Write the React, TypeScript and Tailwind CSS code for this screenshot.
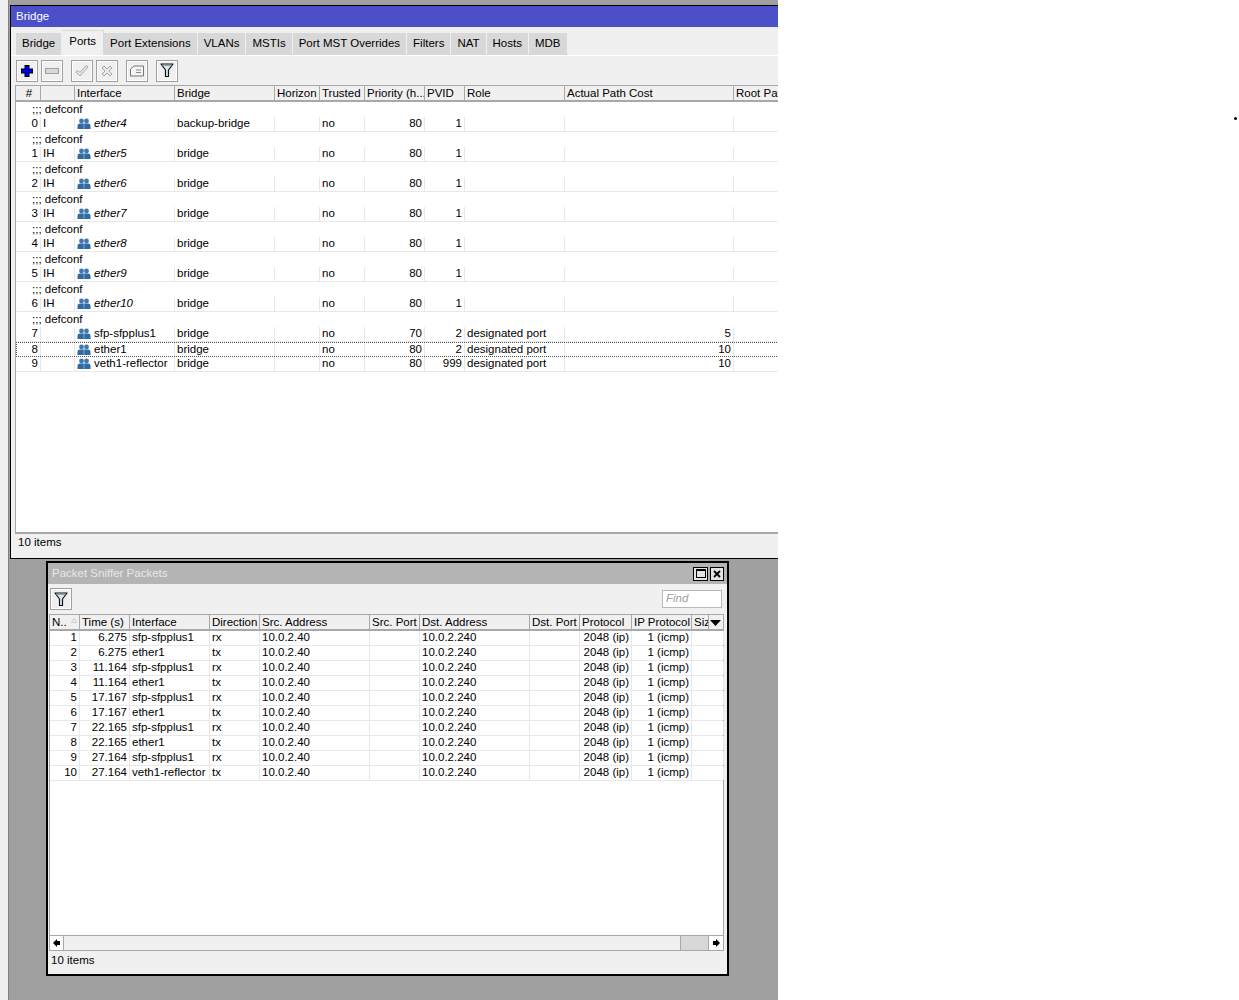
const font = "font-['Liberation_Sans',Arial,sans-serif]"

const tabs = ['Bridge', 'Ports', 'Port Extensions', 'VLANs', 'MSTIs', 'Port MST Overrides', 'Filters', 'NAT', 'Hosts', 'MDB']

type Col = { title: string; w: number; right?: boolean }

const portCols: Col[] = [
  { title: '#', w: 25, right: true },
  { title: '', w: 34 },
  { title: 'Interface', w: 100 },
  { title: 'Bridge', w: 100 },
  { title: 'Horizon', w: 45 },
  { title: 'Trusted', w: 45 },
  { title: 'Priority (h...', w: 60, right: true },
  { title: 'PVID', w: 40, right: true },
  { title: 'Role', w: 100 },
  { title: 'Actual Path Cost', w: 169, right: true },
  { title: 'Root Path Cost', w: 80 },
]

const ports = [
  { n: 0, flags: 'I', name: 'ether4', off: true, bridge: 'backup-bridge', prio: 80, pvid: 1, role: '', cost: '' },
  { n: 1, flags: 'IH', name: 'ether5', off: true, bridge: 'bridge', prio: 80, pvid: 1, role: '', cost: '' },
  { n: 2, flags: 'IH', name: 'ether6', off: true, bridge: 'bridge', prio: 80, pvid: 1, role: '', cost: '' },
  { n: 3, flags: 'IH', name: 'ether7', off: true, bridge: 'bridge', prio: 80, pvid: 1, role: '', cost: '' },
  { n: 4, flags: 'IH', name: 'ether8', off: true, bridge: 'bridge', prio: 80, pvid: 1, role: '', cost: '' },
  { n: 5, flags: 'IH', name: 'ether9', off: true, bridge: 'bridge', prio: 80, pvid: 1, role: '', cost: '' },
  { n: 6, flags: 'IH', name: 'ether10', off: true, bridge: 'bridge', prio: 80, pvid: 1, role: '', cost: '' },
  { n: 7, flags: '', name: 'sfp-sfpplus1', off: false, bridge: 'bridge', prio: 70, pvid: 2, role: 'designated port', cost: '5' },
  { n: 8, flags: '', name: 'ether1', off: false, bridge: 'bridge', prio: 80, pvid: 2, role: 'designated port', cost: '10' },
  { n: 9, flags: '', name: 'veth1-reflector', off: false, bridge: 'bridge', prio: 80, pvid: 999, role: 'designated port', cost: '10' },
]

const packetCols: Col[] = [
  { title: 'N..', w: 30, right: true },
  { title: 'Time (s)', w: 50, right: true },
  { title: 'Interface', w: 80 },
  { title: 'Direction', w: 50 },
  { title: 'Src. Address', w: 110 },
  { title: 'Src. Port', w: 50 },
  { title: 'Dst. Address', w: 110 },
  { title: 'Dst. Port', w: 50 },
  { title: 'Protocol', w: 52, right: true },
  { title: 'IP Protocol', w: 60, right: true },
  { title: 'Siz', w: 17 },
]

const packets = [
  ['1', '6.275', 'sfp-sfpplus1', 'rx'],
  ['2', '6.275', 'ether1', 'tx'],
  ['3', '11.164', 'sfp-sfpplus1', 'rx'],
  ['4', '11.164', 'ether1', 'tx'],
  ['5', '17.167', 'sfp-sfpplus1', 'rx'],
  ['6', '17.167', 'ether1', 'tx'],
  ['7', '22.165', 'sfp-sfpplus1', 'rx'],
  ['8', '22.165', 'ether1', 'tx'],
  ['9', '27.164', 'sfp-sfpplus1', 'rx'],
  ['10', '27.164', 'veth1-reflector', 'tx'],
]

function PortIcon() {
  return (
    <svg width="14" height="12" viewBox="0 0 14 12" className="shrink-0">
      <circle cx="4.5" cy="3" r="2.4" fill="#3f78ad" />
      <circle cx="9.5" cy="3" r="2.4" fill="#3f78ad" />
      <path d="M0.5 11 V8 Q0.5 5.5 3 5.5 H11 Q13.5 5.5 13.5 8 V11 Z" fill="#2f6aa3" />
      <path d="M7 6 V11" stroke="#8fb4d6" strokeWidth="0.8" />
    </svg>
  )
}

function ToolButton({ children, className = '' }: { children: React.ReactNode; className?: string }) {
  return (
    <div className={`flex h-[22px] w-[22px] items-center justify-center border border-[#a0a0a0] bg-[#f0f0f0] shadow-[inset_0_0_0_1px_#ffffff] ${className}`}>
      {children}
    </div>
  )
}

function FilterIcon() {
  return (
    <svg width="14" height="15" viewBox="0 0 14 15">
      <path d="M1 1 H13 L8.5 7 V13.5 H5.5 V7 Z" fill="#dfe6ee" stroke="#111" strokeWidth="1.2" strokeLinejoin="round" />
      <path d="M2.5 2.5 H11.5" stroke="#8aa" strokeWidth="1" />
    </svg>
  )
}

function HeaderRow({ cols, height = 'h-[17px]' }: { cols: Col[]; height?: string }) {
  return (
    <div className={`flex ${height} border-b-2 border-b-[#a8a8a8] border-t border-t-[#a8a8a8] bg-[#f0f0f0]`}>
      {cols.map((c, i) => (
        <div
          key={i}
          style={{ width: c.w }}
          className={`shrink-0 overflow-hidden whitespace-nowrap border-r border-[#a8a8a8] pl-[2px] leading-[14px] ${c.title === '#' ? 'text-center' : ''}`}
        >
          {c.title}
        </div>
      ))}
    </div>
  )
}

function Cell({ w, right, children, className = '' }: { w: number; right?: boolean; children?: React.ReactNode; className?: string }) {
  return (
    <div
      style={{ width: w }}
      className={`flex h-full shrink-0 items-center overflow-hidden whitespace-nowrap border-r border-[#e8e8e8] px-[2px] ${right ? 'justify-end' : ''} ${className}`}
    >
      {children}
    </div>
  )
}

function BridgeWindow() {
  return (
    <div className="flex h-[554px] w-[800px] flex-col border border-black bg-[#f0f0f0]">
      <div className="flex h-[21px] shrink-0 items-center bg-[#4b4fc8] pl-[5px] text-white">Bridge</div>
      <div className="flex h-[28px] shrink-0 items-end pl-[5px]">
        {tabs.map((t) => (
          <div
            key={t}
            className={
              t === 'Ports'
                ? 'flex h-[25px] items-center border-r border-t border-[#d8d8d8] bg-[#f0f0f0] pb-[3px] px-[7px]'
                : 'mr-px flex h-[22px] items-center bg-[#d8d8d8] px-[6px]'
            }
          >
            {t}
          </div>
        ))}
      </div>
      <div className="flex h-[30px] shrink-0 items-center border-t border-white pl-[5px]">
        <ToolButton>
          <svg width="14" height="14" viewBox="0 0 14 14">
            <path d="M7 1 V13 M1 7 H13" stroke="#000" strokeWidth="5" />
            <path d="M7 2 V12 M2 7 H12" stroke="#0000e0" strokeWidth="3" />
          </svg>
        </ToolButton>
        <ToolButton className="ml-[3px]">
          <svg width="14" height="6" viewBox="0 0 14 6">
            <rect x="0.5" y="0.5" width="13" height="5" fill="#d8d8d8" stroke="#a0a0a0" />
          </svg>
        </ToolButton>
        <ToolButton className="ml-[8px]">
          <svg width="14" height="14" viewBox="0 0 14 14">
            <path d="M1 8 L5 12 L13 3 L11 1.5 L5 8.5 L3 6.5 Z" fill="#e8e8e8" stroke="#a8a8a8" />
          </svg>
        </ToolButton>
        <ToolButton className="ml-[3px]">
          <svg width="14" height="14" viewBox="0 0 14 14">
            <path d="M2 4 L4 2 L7 5 L10 2 L12 4 L9 7 L12 10 L10 12 L7 9 L4 12 L2 10 L5 7 Z" fill="#e8e8e8" stroke="#a8a8a8" />
          </svg>
        </ToolButton>
        <ToolButton className="ml-[8px]">
          <svg width="14" height="12" viewBox="0 0 14 12">
            <path d="M0.5 4 L4 1 H13.5 V11 H0.5 Z" fill="#f4f4f4" stroke="#777" />
            <path d="M6 5 H11 M6 7.5 H11" stroke="#888" />
          </svg>
        </ToolButton>
        <ToolButton className="ml-[8px]">
          <FilterIcon />
        </ToolButton>
      </div>
      <div className="ml-[4px] flex min-h-0 flex-1 flex-col border-l border-[#a8a8a8]">
        <HeaderRow cols={portCols} />
        <div className="min-h-0 flex-1 border-b-2 border-[#a8a8a8] bg-white">
          {ports.map((p) => (
            <div key={p.n}>
              {p.off || p.n === 7 ? <div className="h-[15px] pl-[16px] leading-[14px]">;;; defconf</div> : null}
              <div className={`flex h-[15px] ${p.n === 8 ? 'outline-1 -outline-offset-1 outline-dotted outline-[#555]' : 'border-b border-[#e8e8e8]'}`}>
                <Cell w={25} right>{p.n}</Cell>
                <Cell w={34}>{p.flags}</Cell>
                <Cell w={100}>
                  <PortIcon />
                  <span className={`ml-[3px] ${p.off ? 'italic' : ''}`}>{p.name}</span>
                </Cell>
                <Cell w={100}>{p.bridge}</Cell>
                <Cell w={45} />
                <Cell w={45}>no</Cell>
                <Cell w={60} right>{p.prio}</Cell>
                <Cell w={40} right>{p.pvid}</Cell>
                <Cell w={100}>{p.role}</Cell>
                <Cell w={169} right>{p.cost}</Cell>
                <Cell w={80} />
              </div>
            </div>
          ))}
        </div>
      </div>
      <div className="flex h-[24px] shrink-0 items-center pb-[6px] pl-[7px]">10 items</div>
    </div>
  )
}

function PacketWindow() {
  return (
    <div className="ml-[36px] mt-[2px] flex h-[415px] w-[683px] flex-col border-2 border-black border-l-black bg-[#f0f0f0]">
      <div className="flex h-[21px] shrink-0 items-center justify-between bg-[#b4b4b4] pl-[4px] pr-[3px] text-[#e8e8e8]">
        <span>Packet Sniffer Packets</span>
        <div className="flex gap-[2px]">
          <div className="flex h-[14px] w-[15px] items-center justify-center border border-black bg-[#e4e4e4]">
            <div className="h-[9px] w-[10px] border border-black border-t-2" />
          </div>
          <div className="flex h-[14px] w-[14px] items-center justify-center border border-black bg-[#e4e4e4]">
            <svg width="8" height="8" viewBox="0 0 8 8">
              <path d="M1 1 L7 7 M7 1 L1 7" stroke="#000" strokeWidth="1.8" />
            </svg>
          </div>
        </div>
      </div>
      <div className="flex h-[30px] shrink-0 items-center justify-between pl-[2px] pr-[5px]">
        <ToolButton>
          <FilterIcon />
        </ToolButton>
        <div className="flex h-[18px] w-[60px] items-center border border-[#b8b8b8] bg-white pl-[3px] italic text-[#a0a0a0]">Find</div>
      </div>
      <div className="ml-[1px] mr-[3px] flex min-h-0 flex-1 flex-col border-l border-r border-[#a8a8a8]">
        <div className="relative">
          <HeaderRow cols={[...packetCols, { title: '', w: 15 }]} />
          <svg width="6" height="5" viewBox="0 0 6 5" className="absolute left-[21px] top-[4px]">
            <path d="M3 0.5 L5.5 4.5 H0.5 Z" fill="#f4f4f4" stroke="#bbb" strokeWidth="0.7" />
          </svg>
          <svg width="11" height="6" viewBox="0 0 11 6" className="absolute right-[2px] top-[6px]">
            <path d="M0 0 H11 L5.5 6 Z" fill="#000" />
          </svg>
        </div>
        <div className="min-h-0 flex-1 bg-white">
          {packets.map((p) => (
            <div key={p[0]} className="flex h-[15px] border-b border-[#e8e8e8]">
              <Cell w={30} right>{p[0]}</Cell>
              <Cell w={50} right>{p[1]}</Cell>
              <Cell w={80}>{p[2]}</Cell>
              <Cell w={50}>{p[3]}</Cell>
              <Cell w={110}>10.0.2.40</Cell>
              <Cell w={50} />
              <Cell w={110}>10.0.2.240</Cell>
              <Cell w={50} />
              <Cell w={52} right>2048 (ip)</Cell>
              <Cell w={60} right>1 (icmp)</Cell>
              <Cell w={32} />
            </div>
          ))}
        </div>
        <div className="flex h-[16px] shrink-0 border-b border-t border-[#a8a8a8] bg-[#f0f0f0]">
          <div className="flex w-[14px] items-center justify-center border-r border-[#a8a8a8] bg-white">
            <svg width="7" height="8" viewBox="0 0 7 8"><path d="M0 4 L4 0 V2 H7 V6 H4 V8 Z" fill="#000" /></svg>
          </div>
          <div className="flex-1 border-r border-[#a8a8a8]" />
          <div className="w-[28px] border-r border-[#a8a8a8] bg-[#d8d8d8]" />
          <div className="flex w-[14px] items-center justify-center bg-white">
            <svg width="7" height="8" viewBox="0 0 7 8"><path d="M7 4 L3 0 V2 H0 V6 H3 V8 Z" fill="#000" /></svg>
          </div>
        </div>
      </div>
      <div className="flex h-[23px] shrink-0 items-center pb-[3px] pl-[3px]">10 items</div>
    </div>
  )
}

export default function App() {
  return (
    <div className={`relative flex h-[1000px] w-[1239px] overflow-hidden bg-white text-[11.5px] text-black ${font}`}>
      <div className="w-[8px] shrink-0 bg-[#f0f0f0]" />
      <div className="h-full w-[770px] shrink-0 overflow-hidden border-l border-[#808080] bg-[#a0a0a0] pl-px pt-[5px]">
        <BridgeWindow />
        <PacketWindow />
      </div>
      <div className="absolute left-[1234px] top-[117px] h-[3px] w-[3px] rounded-full bg-black" />
    </div>
  )
}
